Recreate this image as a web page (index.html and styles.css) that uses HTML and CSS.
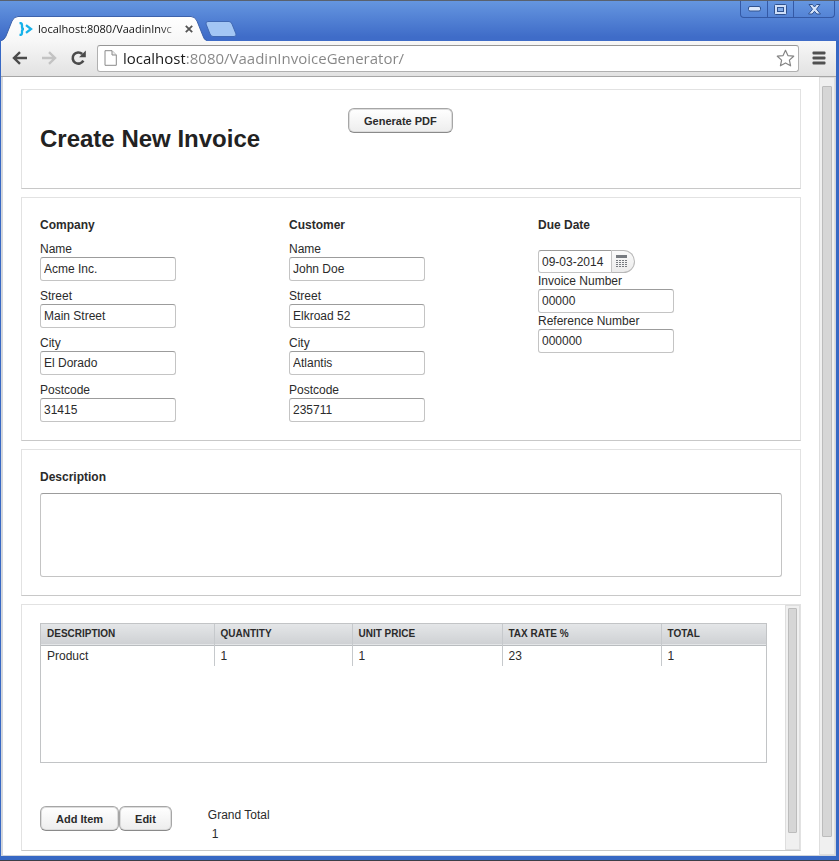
FILE: index.html
```html
<!DOCTYPE html>
<html lang="en">
<head>
<meta charset="utf-8">
<title>localhost:8080/VaadinInvoiceGenerator</title>
<link rel="stylesheet" href="styles.css">
</head>
<body>
<div class="window">
  <header class="titlebar">
    <div class="tab">
      <svg class="tab-shape" viewBox="0 0 206 25" width="206" height="25" aria-hidden="true">
        <defs><linearGradient id="tabfill" x1="0" y1="0" x2="0" y2="1"><stop offset="0" stop-color="#ffffff"/><stop offset="1" stop-color="#f7f7f7"/></linearGradient></defs>
        <path d="M0 25C3 24 4 22 5 20L11 5Q13 .5 17 .5H190Q194 .5 196 5L202 20Q203 24 206 25Z" fill="url(#tabfill)"/>
        <path d="M0 24.500C3 24 4 22 5 20L11 5Q13 .5 17 .5H190Q194 .5 196 5L202 20Q203 24 206 24.500" fill="none" stroke="#3d62ab"/>
      </svg>
      <svg class="favicon" viewBox="0 0 14 14" width="14" height="14" fill="none" stroke="#17b2ea" stroke-width="2.300" aria-hidden="true">
        <path d="M.5 1H1Q3 1 3 3V5Q3 7 5 7Q3 7 3 9V11Q3 13 1 13H.5"/><path d="M7 3.200L12 7L7 10.800"/>
      </svg>
      <span class="tab-title">localhost:8080/VaadinInvc</span>
      <button class="tab-close" type="button" aria-label="Close tab">
        <svg viewBox="0 0 8 8" width="8" height="8" stroke="#555" stroke-width="1.800"><path d="M.8.8L7.200 7.200M7.200.8L.8 7.200"/></svg>
      </button>
    </div>
    <button class="new-tab" type="button" aria-label="New tab">
      <svg viewBox="0 0 32 16" width="32" height="16"><path d="M3 .5H24Q26 .5 27 3L31 13Q31.500 15.500 29 15.500H8Q6 15.500 5 13L1 3Q.5 .5 3 .5Z" fill="#a3c6f4" stroke="#4169b3"/></svg>
    </button>
    <div class="window-controls">
      <button type="button" aria-label="Minimize"><svg viewBox="0 0 13 6" width="13" height="6"><rect x=".5" y=".5" width="12" height="4.500" rx="1.500" fill="#dce8fb" stroke="#30528f"/></svg></button>
      <button type="button" aria-label="Maximize"><svg viewBox="0 0 13 11" width="13" height="11"><rect x=".5" y=".5" width="12" height="10" rx="1" fill="#cfdff8" stroke="#30528f"/><rect x="3.500" y="3.500" width="6" height="4" fill="#7fa9e7" stroke="#30528f"/></svg></button>
      <button type="button" aria-label="Close window" class="wide"><svg viewBox="0 0 13 11" width="13" height="11"><path d="M1 .5H4.500L6.500 3L8.500 .5H12L8.500 5.200L12.500 10H8.800L6.500 7.300L4.200 10H.5L4.500 5.200Z" fill="#d5e3f9" stroke="#30528f"/></svg></button>
    </div>
  </header>

  <nav class="toolbar">
    <button type="button" aria-label="Back"><svg viewBox="0 0 16 14" width="16" height="14" fill="none" stroke="#4b4b4b" stroke-width="2.400"><path d="M15 7H2.500M8 1.200L2 7L8 12.800"/></svg></button>
    <button type="button" aria-label="Forward"><svg viewBox="0 0 16 14" width="16" height="14" fill="none" stroke="#c3c3c3" stroke-width="2.400"><path d="M1 7H13.500M8 1.200L14 7L8 12.800"/></svg></button>
    <button type="button" aria-label="Reload"><svg viewBox="0 0 16 16" width="16" height="16"><path d="M12.200 4A5.600 5.600 0 1 0 13.300 10.600" fill="none" stroke="#4b4b4b" stroke-width="2.600"/><path d="M15.800 .6V7.300H9.100Z" fill="#4b4b4b"/></svg></button>
    <div class="omnibox">
      <svg viewBox="0 0 13 16" width="13" height="16" fill="#fff" stroke="#8a8a8a" aria-hidden="true"><path d="M1 .7H8L12.300 5V15.300H1Z"/><path d="M8 .7V5H12.300" fill="#eee"/></svg>
      <input type="text" class="address" aria-label="Address" value="localhost:8080/VaadinInvoiceGenerator/">
      <button type="button" aria-label="Bookmark"><svg viewBox="0 0 19 18" width="19" height="18"><path d="M9.500 1.300L11.900 6.600L17.700 7.200L13.400 11.100L14.600 16.800L9.500 13.900L4.400 16.800L5.600 11.100L1.300 7.200L7.100 6.600Z" fill="#fff" stroke="#858585" stroke-width="1.200" stroke-linejoin="round"/></svg></button>
    </div>
    <button type="button" aria-label="Menu" class="menu"><svg viewBox="0 0 14 14" width="14" height="14" fill="#505050"><rect x=".5" y=".5" width="13" height="3" rx="1"/><rect x=".5" y="5.500" width="13" height="3" rx="1"/><rect x=".5" y="10.500" width="13" height="3" rx="1"/></svg></button>
  </nav>

  <div class="viewport">
    <main class="page">
      <section class="card intro">
        <h1>Create New Invoice</h1>
        <button type="button" class="btn">Generate PDF</button>
      </section>

      <section class="card columns">
        <div class="column">
          <h2>Company</h2>
          <div class="field"><label for="c-name">Name</label><input id="c-name" type="text" value="Acme Inc."></div>
          <div class="field"><label for="c-street">Street</label><input id="c-street" type="text" value="Main Street"></div>
          <div class="field"><label for="c-city">City</label><input id="c-city" type="text" value="El Dorado"></div>
          <div class="field"><label for="c-post">Postcode</label><input id="c-post" type="text" value="31415"></div>
        </div>
        <div class="column">
          <h2>Customer</h2>
          <div class="field"><label for="u-name">Name</label><input id="u-name" type="text" value="John Doe"></div>
          <div class="field"><label for="u-street">Street</label><input id="u-street" type="text" value="Elkroad 52"></div>
          <div class="field"><label for="u-city">City</label><input id="u-city" type="text" value="Atlantis"></div>
          <div class="field"><label for="u-post">Postcode</label><input id="u-post" type="text" value="235711"></div>
        </div>
        <div class="column tight">
          <h2><label for="due">Due Date</label></h2>
          <div class="date">
            <input id="due" type="text" value="09-03-2014">
            <button type="button" aria-label="Pick a date"><svg viewBox="0 0 11 13" width="11" height="13" fill="#777b80"><path d="M0 0h11v3H0zM0 5h2v1H0zM3 5h2v1H3zM6 5h2v1H6zM9 5h2v1H9zM0 7h2v1H0zM3 7h2v1H3zM6 7h2v1H6zM9 7h2v1H9zM0 9h2v1H0zM3 9h2v1H3zM6 9h2v1H6zM9 9h2v1H9zM0 11h2v1H0zM3 11h2v1H3zM6 11h2v1H6zM9 11h2v1H9z"/></svg></button>
          </div>
          <div class="field"><label for="inv">Invoice Number</label><input id="inv" type="text" value="00000"></div>
          <div class="field"><label for="ref">Reference Number</label><input id="ref" type="text" value="000000"></div>
        </div>
      </section>

      <section class="card column">
        <h2><label for="desc">Description</label></h2>
        <textarea id="desc"></textarea>
      </section>

      <section class="card items">
        <div class="items-body">
          <div class="table-box">
            <table>
              <colgroup><col class="c-desc"><col class="c-qty"><col class="c-price"><col class="c-tax"><col></colgroup>
              <thead><tr><th>Description</th><th>Quantity</th><th>Unit Price</th><th>Tax Rate %</th><th>Total</th></tr></thead>
              <tbody><tr><td>Product</td><td>1</td><td>1</td><td>23</td><td>1</td></tr></tbody>
            </table>
          </div>
          <div class="items-footer">
            <div class="actions">
              <button type="button" class="btn">Add Item</button><button type="button" class="btn">Edit</button>
            </div>
            <dl class="total"><dt>Grand Total</dt><dd>1</dd></dl>
          </div>
        </div>
        <div class="scroll"><div class="thumb"></div></div>
      </section>
    </main>
    <div class="scroll page-scroll"><div class="thumb"></div></div>
  </div>
</div>
</body>
</html>
```
FILE: styles.css
```css
* { box-sizing: border-box; }

body {
  margin: 0;
  background: #3f70cb;
  color: #2b2b2b;
  font: 12px/16px "Liberation Sans", Arial, sans-serif;
}

button {
  margin: 0;
  padding: 0;
  border: 0;
  background: none;
  font: inherit;
  color: inherit;
}

svg { display: block; }
h1, h2, dl, dd { margin: 0; }

.window {
  display: flex;
  flex-direction: column;
  min-height: 100vh;
  padding: 0 3px 4px 1px;
  border-bottom: 1px solid #3b3f48;
  background: #3768c4;
}

/* Title bar */
.titlebar {
  display: flex;
  align-items: flex-end;
  height: 41px;
  margin: 0 -3px 0 -1px;
  padding: 0 4px 0 1px;
  border-top: 1px solid #59616e;
  background: linear-gradient(#6596e0, #3f6cc8 90%);
}

.tab {
  position: relative;
  display: flex;
  align-items: center;
  gap: 5px;
  width: 206px;
  height: 25px;
  padding: 0 14px 0 18px;
}

.tab-shape { position: absolute; left: 0; top: 0; }
.favicon, .tab-title, .tab-close { position: relative; }

.tab-title {
  flex: 1;
  white-space: nowrap;
  font: 11px/16px "Open Sans", "Noto Sans", sans-serif;
  color: #111;
  -webkit-mask-image: linear-gradient(to right, #000 85%, rgba(0, 0, 0, 0.3));
  mask-image: linear-gradient(to right, #000 85%, rgba(0, 0, 0, 0.3));
}

.new-tab { margin: 0 auto 4px -2px; }

.window-controls {
  display: flex;
  align-self: flex-start;
  height: 17px;
  border: 1px solid #3459a5;
  border-top: 0;
  border-radius: 0 0 4px 4px;
}

.window-controls button {
  display: grid;
  place-items: center;
  width: 26px;
  border-left: 1px solid #3459a5;
}

.window-controls button:first-child { border-left: 0; }
.window-controls .wide { width: 41px; }

/* Toolbar */
.toolbar {
  display: flex;
  align-items: center;
  gap: 13px;
  height: 36px;
  padding: 0 10px 1px 11px;
  border-bottom: 1px solid #a6a6a6;
  background: linear-gradient(#f7f7f7, #e2e2e2);
}

.omnibox {
  display: flex;
  flex: 1;
  align-items: center;
  gap: 6px;
  height: 27px;
  margin-left: -2px;
  padding: 0 3px 0 6px;
  border: 1px solid #b0b0b0;
  border-top-color: #969696;
  border-radius: 3px;
  background: #fff;
}

.address {
  flex: 1;
  min-width: 0;
  padding: 0;
  border: 0;
  outline: 0;
  font: 15px/22px "Open Sans", "Noto Sans", sans-serif;
  color: transparent;
  background: linear-gradient(to right, #1b1b1b 62px, #858585 62px);
  -webkit-background-clip: text;
  background-clip: text;
}

/* Page area */
.viewport {
  display: flex;
  flex: 1;
  border: solid #d3d6dc;
  border-width: 0 1px 1px 2px;
  background: #fff;
}

.page {
  display: flex;
  flex: 1;
  flex-direction: column;
  gap: 8px;
  min-width: 0;
  padding: 12px 18px 3px;
}

.scroll {
  flex: none;
  width: 15px;
  padding: 2px;
  border: 1px solid #dedede;
  background: #f0f0f0;
}

.thumb {
  height: 94%;
  border: 1px solid #bcbcbc;
  border-radius: 1px;
  background: #d6d6d6;
}

.page-scroll { width: 16px; padding-top: 8px; }
.page-scroll .thumb { height: 98%; }

.card {
  padding: 18px;
  border: 1px solid #e2e2e2;
  border-bottom-color: #c8c8c8;
  background: #fff;
}

h1 { font-size: 24px; line-height: 28px; color: #222; }
h2 { font-size: 12px; line-height: 18px; }

.intro {
  display: grid;
  grid-template-columns: 308px auto;
  justify-content: start;
  align-items: start;
  min-height: 100px;
}

.intro h1 { padding-top: 17px; }

.columns {
  display: grid;
  grid-template-columns: repeat(3, 1fr);
  gap: 5px;
}

.column {
  display: flex;
  flex-direction: column;
  gap: 7px;
}

.tight { gap: 0; }
.tight .date { margin-top: 16px; }

.field {
  display: flex;
  flex-direction: column;
  width: 136px;
}

.field input, .date input, textarea {
  padding: 0 3px;
  border: 1px solid #c4c4c4;
  border-top-color: #9c9c9c;
  border-radius: 3px;
  background: #fff;
  color: #2b2b2b;
  font: inherit;
}

.field input { height: 24px; }

textarea {
  display: block;
  width: 100%;
  height: 84px;
  resize: none;
}

.date { display: flex; height: 23px; }

.date input {
  width: 74px;
  border-radius: 3px 0 0 3px;
}

.date button {
  display: grid;
  place-items: center;
  width: 23px;
  padding-right: 3px;
  border: 1px solid #b8b8b8;
  border-left: 0;
  border-radius: 0 12px 12px 0;
  background: linear-gradient(#fafafa, #ececec);
}

.btn {
  height: 25px;
  padding: 0 15px;
  border: 1px solid #a6a6a6;
  border-bottom-color: #8a8a8a;
  border-radius: 6px;
  background: linear-gradient(#fff, #ededed);
  box-shadow: inset 0 0 0 1px #dcdcdc;
  font-size: 11px;
  font-weight: bold;
}

/* Invoice items */
.items { display: flex; padding: 0; }

.items-body {
  flex: 1;
  min-width: 0;
  padding: 18px 18px 6px;
}

.table-box {
  height: 140px;
  border: 1px solid #c2c4c6;
}

table {
  width: 100%;
  table-layout: fixed;
  border-collapse: collapse;
}

.c-desc { width: 173px; }
.c-qty { width: 138px; }
.c-price { width: 150px; }
.c-tax { width: 159px; }

th, td {
  height: 21px;
  padding: 0 6px;
  border-left: 1px solid #c6c9cc;
  text-align: left;
}

td { padding-top: 1px; }
th:first-child, td:first-child { border-left: 0; }

thead tr {
  border-bottom: 1px solid #b9bcbf;
  background: linear-gradient(#e4e6e8, #cfd1d4);
}

th {
  font-size: 10px;
  text-transform: uppercase;
}

.items-footer {
  display: flex;
  gap: 36px;
  margin-top: 43px;
}

.actions { display: flex; }
.total { line-height: 19px; }
.total dd { padding-left: 4px; }
```
